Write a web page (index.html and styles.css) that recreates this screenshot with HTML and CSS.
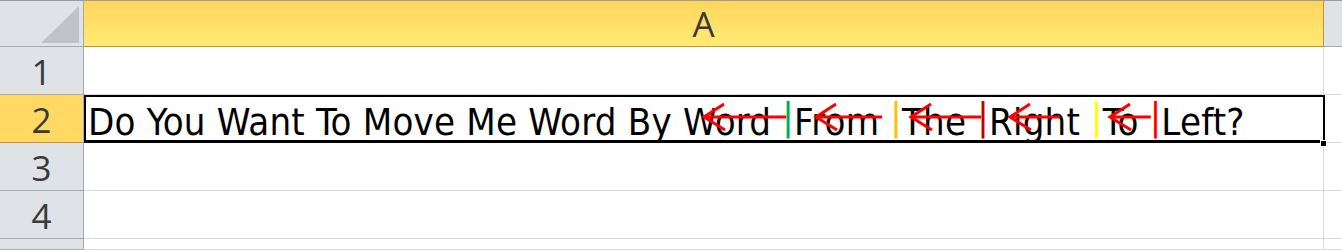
FILE: index.html
```html
<!DOCTYPE html>
<html lang="en">
<head>
    <meta charset="UTF-8">
    <title>Sheet</title>
    <link rel="stylesheet" href="styles.css">
</head>
<body>
    <section class="sheet">
        <!-- header row -->
        <div class="corner"><span class="corner-tri"></span></div>
        <div class="colhead">A</div>
        <div class="colhead-rest"></div>

        <div class="rowhead">1</div>
        <div class="cell"></div>
        <div class="cell-rest"></div>

        <div class="rowhead active">2</div>
        <div class="cell selected">
            <p class="text">Do You Want To Move Me Word By <span class="w"><svg class="arrow a-word"><line x1="2" y1="15" x2="100%" y2="15"/><polyline points="22,2 2,15 23,28"/></svg>Word</span> <span class="pipe green">|</span><span class="w"><svg class="arrow a-from"><line x1="2" y1="15" x2="100%" y2="15"/><polyline points="22,2 2,15 23,28"/></svg>From</span> <span class="pipe orange">|</span><span class="w"><svg class="arrow a-the"><line x1="2" y1="15" x2="100%" y2="15"/><polyline points="22,2 2,15 23,28"/></svg>The</span> <span class="pipe darkred">|</span><span class="w"><svg class="arrow a-right"><line x1="2" y1="15" x2="100%" y2="15"/><polyline points="22,2 2,15 23,28"/></svg>Right</span> <span class="pipe yellow">|</span><span class="w"><svg class="arrow a-to"><line x1="2" y1="15" x2="100%" y2="15"/><polyline points="22,2 2,15 23,28"/></svg>To</span> <span class="pipe red">|</span>Left?</p>
            <span class="handle"></span>
        </div>
        <div class="cell-rest"></div>

        <div class="rowhead">3</div>
        <div class="cell"></div>
        <div class="cell-rest"></div>

        <div class="rowhead">4</div>
        <div class="cell"></div>
        <div class="cell-rest"></div>

        <div class="rowhead"></div>
        <div class="cell"></div>
        <div class="cell-rest"></div>
    </section>
</body>
</html>
```

FILE: styles.css
```css
* {
    margin: 0;
    padding: 0;
    box-sizing: border-box;
}
body {
    background: #fff;
    overflow: hidden;
}
.sheet {
    display: grid;
    grid-template-columns: 84px 1240px 1fr;
    grid-template-rows: 47px repeat(4, 48px) 1fr;
    height: 250px;
    font-family: "Open Sans", "Noto Sans", sans-serif;
    color: #333;
}

/* headers */
.corner {
    position: relative;
    background: #dfe2e7;
    border-top: 1px solid #9c9c9c;
    border-bottom: 1px solid #a6aaaf;
    border-right: 1px solid #a6aaaf;
}
.corner-tri {
    position: absolute;
    right: 4px;
    bottom: 3px;
    width: 38px;
    height: 37px;
    background: #bfc3c7;
    clip-path: polygon(100% 0, 100% 100%, 0 100%);
}
.colhead {
    display: flex;
    justify-content: center;
    align-items: center;
    background: linear-gradient(#ffd65c, #ffea75);
    border-top: 1px solid #9c9c9c;
    border-bottom: 1px solid #c99034;
    border-right: 1px solid #c99034;
    font-size: 35px;
    color: #3a3a3a;
}
.colhead-rest {
    background: #dfe2e7;
    border-top: 1px solid #9c9c9c;
    border-bottom: 1px solid #a6aaaf;
}
.rowhead {
    display: flex;
    justify-content: center;
    align-items: center;
    background: #dfe2e7;
    border-right: 1px solid #a6aaaf;
    border-bottom: 1px solid #a6aaaf;
    font-size: 35px;
    color: #3a3a3a;
    padding-top: 2px;
}
.rowhead.active {
    background: #ffd962;
    border-bottom-color: #c99034;
}
.cell {
    border-right: 1px solid #dadada;
    border-bottom: 1px solid #dadada;
}
.cell-rest {
    border-bottom: 1px solid #dadada;
}

/* selected cell */
.selected {
    position: relative;
    z-index: 2;
}
.selected::after {
    content: "";
    position: absolute;
    left: 0;
    top: 0;
    right: -2px;
    bottom: -1px;
    border: 2px solid #000;
    border-bottom-width: 3px;
}
.handle {
    position: absolute;
    right: -4px;
    bottom: -5px;
    width: 7px;
    height: 7px;
    background: #000;
    border: 1px solid #fff;
    z-index: 3;
}
.text {
    font-family: "DejaVu Sans Condensed", "DejaVu Sans", sans-serif;
    font-stretch: condensed;
    font-size: 38px;
    letter-spacing: 0.2px;
    line-height: 47px;
    padding: 4px 0 0 4px;
    color: #000;
    white-space: nowrap;
}
.w {
    position: relative;
}
.pipe {
    position: relative;
    top: -6px;
}
.green { color: #00b050; }
.orange { color: #ffc000; }
.darkred { color: #c00000; }
.yellow { color: #ffff00; }
.red { color: #ff0000; }

/* drawn arrows */
.arrow {
    position: absolute;
    top: 2px;
    left: 0;
    height: 30px;
    overflow: visible;
    stroke: #ff0000;
    stroke-width: 3;
    fill: none;
}
.a-word { left: 19px; width: calc(100% - 4px); }
.a-from { left: 20px; width: calc(100% - 17px); }
.a-the { left: 7px; width: calc(100% + 8px); }
.a-right { left: 19px; width: calc(100% - 39px); }
.a-to { left: 5px; width: calc(100% + 7px); }
```
